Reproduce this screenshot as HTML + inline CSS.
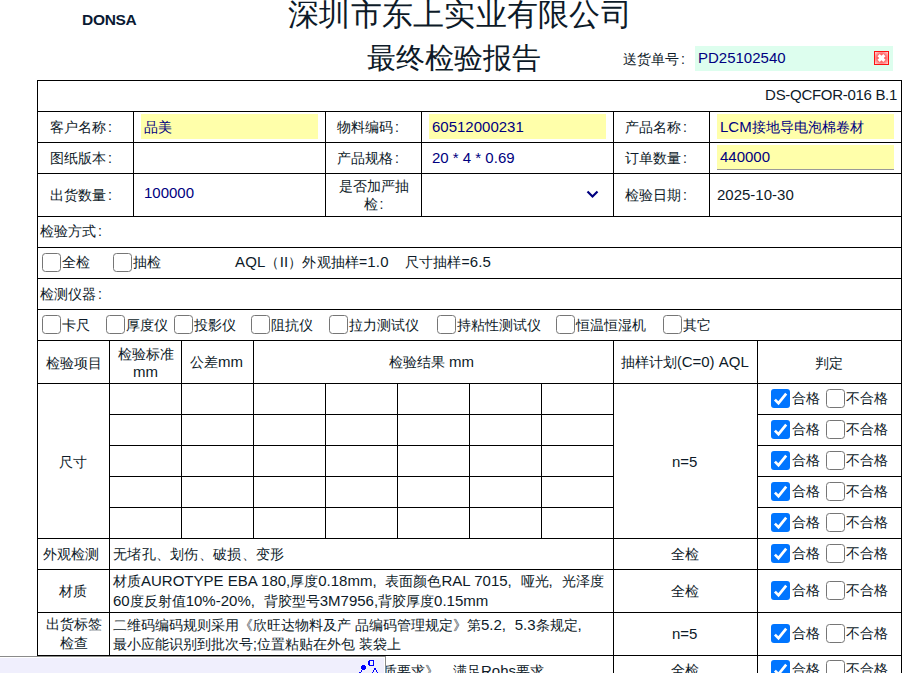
<!DOCTYPE html>
<html><head><meta charset="utf-8"><style>
html,body{margin:0;padding:0;background:#fff;width:924px;height:673px;overflow:hidden;position:relative}
body{font-family:"Liberation Sans",sans-serif;font-size:14px;color:#0d1a28}
.l{position:absolute;background:#000}
.w{position:absolute;background:#fff}
.t{position:absolute;white-space:nowrap;line-height:18px}
.v{color:#000080}
.n{font-size:15px}
.c{padding-left:2px}
.fc{display:inline-block;width:13px;font-size:15px}
.b{color:#0a1a33}
.abs{position:absolute}
.mint{position:absolute;background:#ddfeee}
.yel{position:absolute;background:#ffffaa}
.cb{position:absolute;width:17px;height:17px;border:1px solid #767676;border-radius:3.5px;background:#fff}
.cbc{position:absolute;width:19px;height:19px;border-radius:3px;background:#0075ff}
.cbc svg{position:absolute;left:0;top:0}
.ov{position:absolute;left:0;top:656px;width:385px;height:17px;background:#f0effd;border-top:1px solid #8a8a8a;border-right:1px solid #8a8a8a;box-shadow:inset -1px 1px 0 #fff}
</style></head><body>
<div class="l" style="left:37px;top:80px;width:865px;height:1px"></div>
<div class="l" style="left:37px;top:111px;width:865px;height:1px"></div>
<div class="l" style="left:37px;top:142px;width:865px;height:1px"></div>
<div class="l" style="left:37px;top:173px;width:865px;height:1px"></div>
<div class="l" style="left:37px;top:216px;width:865px;height:1px"></div>
<div class="l" style="left:37px;top:247px;width:865px;height:1px"></div>
<div class="l" style="left:37px;top:278px;width:865px;height:1px"></div>
<div class="l" style="left:37px;top:309px;width:865px;height:1px"></div>
<div class="l" style="left:37px;top:340px;width:865px;height:1px"></div>
<div class="l" style="left:37px;top:383px;width:865px;height:1px"></div>
<div class="l" style="left:37px;top:414px;width:865px;height:1px"></div>
<div class="l" style="left:37px;top:445px;width:865px;height:1px"></div>
<div class="l" style="left:37px;top:476px;width:865px;height:1px"></div>
<div class="l" style="left:37px;top:507px;width:865px;height:1px"></div>
<div class="l" style="left:37px;top:538px;width:865px;height:1px"></div>
<div class="l" style="left:37px;top:569px;width:865px;height:1px"></div>
<div class="l" style="left:37px;top:612px;width:865px;height:1px"></div>
<div class="l" style="left:37px;top:655px;width:865px;height:1px"></div>
<div class="l" style="left:37px;top:80px;width:1px;height:594px"></div>
<div class="l" style="left:901px;top:80px;width:1px;height:594px"></div>
<div class="l" style="left:133px;top:111px;width:1px;height:106px"></div>
<div class="l" style="left:325px;top:111px;width:1px;height:106px"></div>
<div class="l" style="left:421px;top:111px;width:1px;height:106px"></div>
<div class="l" style="left:613px;top:111px;width:1px;height:106px"></div>
<div class="l" style="left:709px;top:111px;width:1px;height:106px"></div>
<div class="l" style="left:109px;top:340px;width:1px;height:199px"></div>
<div class="l" style="left:181px;top:340px;width:1px;height:199px"></div>
<div class="l" style="left:253px;top:340px;width:1px;height:199px"></div>
<div class="l" style="left:325px;top:383px;width:1px;height:156px"></div>
<div class="l" style="left:397px;top:383px;width:1px;height:156px"></div>
<div class="l" style="left:469px;top:383px;width:1px;height:156px"></div>
<div class="l" style="left:541px;top:383px;width:1px;height:156px"></div>
<div class="l" style="left:613px;top:340px;width:1px;height:334px"></div>
<div class="l" style="left:757px;top:340px;width:1px;height:334px"></div>
<div class="l" style="left:109px;top:538px;width:1px;height:136px"></div>
<div class="w" style="left:38px;top:414px;width:71px;height:1px;"></div>
<div class="w" style="left:614px;top:414px;width:143px;height:1px;"></div>
<div class="w" style="left:38px;top:445px;width:71px;height:1px;"></div>
<div class="w" style="left:614px;top:445px;width:143px;height:1px;"></div>
<div class="w" style="left:38px;top:476px;width:71px;height:1px;"></div>
<div class="w" style="left:614px;top:476px;width:143px;height:1px;"></div>
<div class="w" style="left:38px;top:507px;width:71px;height:1px;"></div>
<div class="w" style="left:614px;top:507px;width:143px;height:1px;"></div>
<div class="t b" style="left:82px;top:11px;font-size:15.5px;letter-spacing:-0.3px;font-weight:bold">DONSA</div>
<div class="t " style="left:288px;top:-3px;font-size:31px;line-height:36px;letter-spacing:0.25px">深圳市东上实业有限公司</div>
<div class="t " style="left:367px;top:41px;font-size:29px;line-height:34px">最终检验报告</div>
<div class="t " style="left:623px;top:50px;">送货单号<span class="c">:</span></div>
<div class="mint" style="left:695px;top:46px;width:198px;height:25px;"></div>
<div class="t v" style="left:698px;top:49px;"><span class="n">PD25102540</span></div>
<svg class="abs" style="left:874px;top:51px" width="15" height="14" viewBox="0 0 15 14"><defs><radialGradient id="rg" cx="50%" cy="50%" r="70%"><stop offset="0%" stop-color="#f44"/><stop offset="45%" stop-color="#f66"/><stop offset="100%" stop-color="#fee"/></radialGradient></defs><rect x="0.5" y="0.5" width="14" height="13" fill="url(#rg)" stroke="#f11" stroke-width="1"/><path d="M4.6 4.1 L10.4 9.9 M10.4 4.1 L4.6 9.9" stroke="#fff" stroke-width="3.2"/><rect x="5.5" y="5" width="4" height="4" fill="#fff"/></svg>
<div class="t " style="left:613px;top:86px;width:284px;text-align:right;letter-spacing:-0.3px"><span class="n">DS-QCFOR-016 B.1</span></div>
<div class="t " style="left:50px;top:118px;">客户名称<span class="c">:</span></div>
<div class="yel" style="left:141px;top:114px;width:177px;height:25px;"></div>
<div class="t v" style="left:144px;top:118px;">品美</div>
<div class="t " style="left:337px;top:118px;">物料编码<span class="c">:</span></div>
<div class="yel" style="left:429px;top:114px;width:177px;height:25px;"></div>
<div class="t v" style="left:432px;top:118px;"><span class="n">60512000231</span></div>
<div class="t " style="left:625px;top:118px;">产品名称<span class="c">:</span></div>
<div class="yel" style="left:717px;top:114px;width:177px;height:25px;"></div>
<div class="t v" style="left:720px;top:118px;"><span class="n">LCM</span>接地导电泡棉卷材</div>
<div class="t " style="left:50px;top:149px;">图纸版本<span class="c">:</span></div>
<div class="t " style="left:337px;top:149px;">产品规格<span class="c">:</span></div>
<div class="t v" style="left:432px;top:149px;"><span class="n">20 * 4 * 0.69</span></div>
<div class="t " style="left:625px;top:149px;">订单数量<span class="c">:</span></div>
<div class="yel" style="left:717px;top:145px;width:177px;height:25px;border-bottom:1px solid #999;box-sizing:border-box"></div>
<div class="t v" style="left:720px;top:148px;"><span class="n">440000</span></div>
<div class="t " style="left:50px;top:186px;">出货数量<span class="c">:</span></div>
<div class="t v" style="left:144px;top:184px;"><span class="n">100000</span></div>
<div class="t " style="left:326px;top:177px;width:95px;text-align:center;line-height:18px">是否加严抽<br>检<span class="c">:</span></div>
<svg class="abs" style="left:586px;top:190px" width="13" height="9" viewBox="0 0 13 9"><path d="M1.5 1.5 L6.5 6.5 L11.5 1.5" stroke="#000080" stroke-width="2.2" fill="none"/></svg>
<div class="t " style="left:625px;top:186px;">检验日期<span class="c">:</span></div>
<div class="t " style="left:717px;top:186px;"><span class="n">2025-10-30</span></div>
<div class="t " style="left:40px;top:222px;">检验方式<span class="c">:</span></div>
<div class="cb" style="left:42px;top:253px"></div>
<div class="t " style="left:62px;top:253px;">全检</div>
<div class="cb" style="left:113px;top:253px"></div>
<div class="t " style="left:133px;top:253px;">抽检</div>
<div class="t " style="left:235px;top:253px;letter-spacing:0.15px"><span class="n">AQL</span>（<span class="n">II</span>）外观抽样=<span class="n">1.0</span>&nbsp;&nbsp;&nbsp;&nbsp;尺寸抽样=<span class="n">6.5</span></div>
<div class="t " style="left:40px;top:285px;">检测仪器<span class="c">:</span></div>
<div class="cb" style="left:42px;top:315px"></div>
<div class="t " style="left:62px;top:316px;">卡尺</div>
<div class="cb" style="left:106px;top:315px"></div>
<div class="t " style="left:126px;top:316px;">厚度仪</div>
<div class="cb" style="left:174px;top:315px"></div>
<div class="t " style="left:194px;top:316px;">投影仪</div>
<div class="cb" style="left:251px;top:315px"></div>
<div class="t " style="left:271px;top:316px;">阻抗仪</div>
<div class="cb" style="left:329px;top:315px"></div>
<div class="t " style="left:349px;top:316px;">拉力测试仪</div>
<div class="cb" style="left:437px;top:315px"></div>
<div class="t " style="left:457px;top:316px;">持粘性测试仪</div>
<div class="cb" style="left:556px;top:315px"></div>
<div class="t " style="left:576px;top:316px;">恒温恒湿机</div>
<div class="cb" style="left:663px;top:315px"></div>
<div class="t " style="left:683px;top:316px;">其它</div>
<div class="t " style="left:46px;top:354px;">检验项目</div>
<div class="t " style="left:110px;top:345px;width:71px;text-align:center;line-height:18px">检验标准<br><span class="n">mm</span></div>
<div class="t " style="left:190px;top:353px;">公差<span class="n">mm</span></div>
<div class="t " style="left:389px;top:353px;">检验结果 <span class="n">mm</span></div>
<div class="t " style="left:621px;top:353px;">抽样计划(<span class="n">C=0) AQL</span></div>
<div class="t " style="left:815px;top:354px;">判定</div>
<div class="t " style="left:59px;top:453px;">尺寸</div>
<div class="t " style="left:672px;top:453px;"><span class="n">n=5</span></div>
<div class="cbc" style="left:771px;top:389px"><svg width="19" height="19" viewBox="0 0 19 19"><path d="M3.9 10.6 L7.5 14.2 L15.2 4.6" stroke="#fff" stroke-width="2.7" fill="none" stroke-linecap="butt" stroke-linejoin="miter"/></svg></div>
<div class="t " style="left:792px;top:389px;">合格</div>
<div class="cb" style="left:826px;top:389px"></div>
<div class="t " style="left:846px;top:389px;">不合格</div>
<div class="cbc" style="left:771px;top:420px"><svg width="19" height="19" viewBox="0 0 19 19"><path d="M3.9 10.6 L7.5 14.2 L15.2 4.6" stroke="#fff" stroke-width="2.7" fill="none" stroke-linecap="butt" stroke-linejoin="miter"/></svg></div>
<div class="t " style="left:792px;top:420px;">合格</div>
<div class="cb" style="left:826px;top:420px"></div>
<div class="t " style="left:846px;top:420px;">不合格</div>
<div class="cbc" style="left:771px;top:451px"><svg width="19" height="19" viewBox="0 0 19 19"><path d="M3.9 10.6 L7.5 14.2 L15.2 4.6" stroke="#fff" stroke-width="2.7" fill="none" stroke-linecap="butt" stroke-linejoin="miter"/></svg></div>
<div class="t " style="left:792px;top:451px;">合格</div>
<div class="cb" style="left:826px;top:451px"></div>
<div class="t " style="left:846px;top:451px;">不合格</div>
<div class="cbc" style="left:771px;top:482px"><svg width="19" height="19" viewBox="0 0 19 19"><path d="M3.9 10.6 L7.5 14.2 L15.2 4.6" stroke="#fff" stroke-width="2.7" fill="none" stroke-linecap="butt" stroke-linejoin="miter"/></svg></div>
<div class="t " style="left:792px;top:482px;">合格</div>
<div class="cb" style="left:826px;top:482px"></div>
<div class="t " style="left:846px;top:482px;">不合格</div>
<div class="cbc" style="left:771px;top:513px"><svg width="19" height="19" viewBox="0 0 19 19"><path d="M3.9 10.6 L7.5 14.2 L15.2 4.6" stroke="#fff" stroke-width="2.7" fill="none" stroke-linecap="butt" stroke-linejoin="miter"/></svg></div>
<div class="t " style="left:792px;top:513px;">合格</div>
<div class="cb" style="left:826px;top:513px"></div>
<div class="t " style="left:846px;top:513px;">不合格</div>
<div class="t " style="left:43px;top:545px;">外观检测</div>
<div class="t " style="left:113px;top:545px;letter-spacing:0.3px">无堵孔、划伤、破损、变形</div>
<div class="t " style="left:671px;top:545px;">全检</div>
<div class="cbc" style="left:771px;top:544px"><svg width="19" height="19" viewBox="0 0 19 19"><path d="M3.9 10.6 L7.5 14.2 L15.2 4.6" stroke="#fff" stroke-width="2.7" fill="none" stroke-linecap="butt" stroke-linejoin="miter"/></svg></div>
<div class="t " style="left:792px;top:544px;">合格</div>
<div class="cb" style="left:826px;top:544px"></div>
<div class="t " style="left:846px;top:544px;">不合格</div>
<div class="t " style="left:59px;top:582px;">材质</div>
<div class="t " style="left:113px;top:571px;line-height:19px">材质<span class="n">AUROTYPE EBA 180,</span>厚度<span class="n">0.18mm</span><span class="fc">,</span>表面颜色<span class="n">RAL 7015</span><span class="fc">,</span>哑光<span class="fc">,</span>光泽度<br><span class="n">60</span>度反射值<span class="n">10%-20%</span><span class="fc">,</span>背胶型号<span class="n">3M7956,</span>背胶厚度<span class="n">0.15mm</span></div>
<div class="t " style="left:671px;top:582px;">全检</div>
<div class="cbc" style="left:771px;top:581px"><svg width="19" height="19" viewBox="0 0 19 19"><path d="M3.9 10.6 L7.5 14.2 L15.2 4.6" stroke="#fff" stroke-width="2.7" fill="none" stroke-linecap="butt" stroke-linejoin="miter"/></svg></div>
<div class="t " style="left:792px;top:581px;">合格</div>
<div class="cb" style="left:826px;top:581px"></div>
<div class="t " style="left:846px;top:581px;">不合格</div>
<div class="t " style="left:38px;top:615px;width:71px;text-align:center;line-height:19px">出货标签<br>检查</div>
<div class="t " style="left:113px;top:615px;line-height:19px">二维码编码规则采用《欣旺达物料及产 品编码管理规定》第<span class="n">5.2</span><span class="fc">,</span><span class="n">5.3</span>条规定<span class="fc">,</span><br>最小应能识别到批次号;位置粘贴在外包 装袋上</div>
<div class="t " style="left:672px;top:625px;"><span class="n">n=5</span></div>
<div class="cbc" style="left:771px;top:624px"><svg width="19" height="19" viewBox="0 0 19 19"><path d="M3.9 10.6 L7.5 14.2 L15.2 4.6" stroke="#fff" stroke-width="2.7" fill="none" stroke-linecap="butt" stroke-linejoin="miter"/></svg></div>
<div class="t " style="left:792px;top:624px;">合格</div>
<div class="cb" style="left:826px;top:624px"></div>
<div class="t " style="left:846px;top:624px;">不合格</div>
<div class="t " style="left:383px;top:662px;">质要求》</div>
<div class="t " style="left:453px;top:662px;">满足<span class="n">Rohs</span>要求</div>
<div class="t " style="left:671px;top:661px;">全检</div>
<div class="cbc" style="left:771px;top:660px"><svg width="19" height="19" viewBox="0 0 19 19"><path d="M3.9 10.6 L7.5 14.2 L15.2 4.6" stroke="#fff" stroke-width="2.7" fill="none" stroke-linecap="butt" stroke-linejoin="miter"/></svg></div>
<div class="t " style="left:792px;top:660px;">合格</div>
<div class="cb" style="left:826px;top:660px"></div>
<div class="t " style="left:846px;top:660px;">不合格</div>
<div class="ov"></div><svg class="abs" style="left:0;top:0" width="385" height="673" shape-rendering="crispEdges" fill="#00f"><rect x="369" y="660" width="5" height="1"/><rect x="368" y="661" width="2" height="4"/><rect x="373" y="661" width="1" height="4"/><rect x="369" y="665" width="5" height="1"/><rect x="362" y="665" width="3" height="5"/><rect x="361" y="666" width="5" height="3"/><rect x="361" y="670" width="1" height="2"/><rect x="359" y="672" width="2" height="1"/><rect x="374" y="668" width="2" height="2"/><rect x="373" y="670" width="1" height="2"/><rect x="376" y="670" width="1" height="2"/><rect x="372" y="672" width="1" height="1"/><rect x="377" y="672" width="1" height="1"/></svg>
</body></html>
